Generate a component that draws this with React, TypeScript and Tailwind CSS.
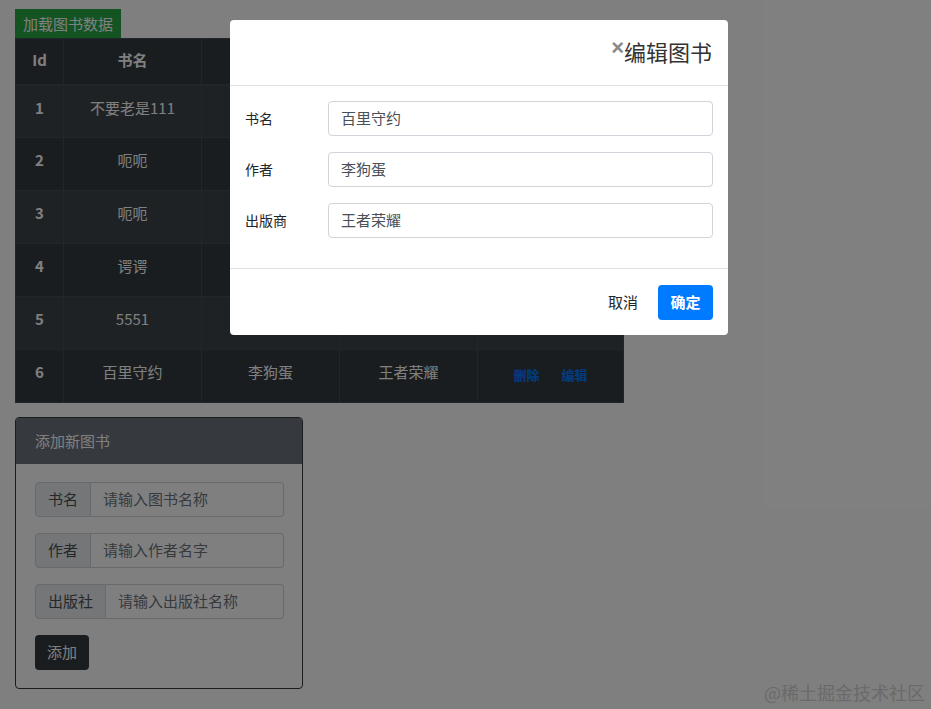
import React from "react";

const rows = [
  { id: 1, name: "不要老是111", author: "", pub: "" },
  { id: 2, name: "呃呃", author: "", pub: "" },
  { id: 3, name: "呃呃", author: "", pub: "" },
  { id: 4, name: "谔谔", author: "", pub: "" },
  { id: 5, name: "5551", author: "", pub: "" },
  { id: 6, name: "百里守约", author: "李狗蛋", pub: "王者荣耀" },
];

function Cell({ children, className = "" }: { children?: React.ReactNode; className?: string }) {
  return (
    <td className={"border border-[#454d55] align-top text-center leading-[24px] " + className}>
      {children}
    </td>
  );
}

export default function App() {
  return (
    <div
      className="relative w-[931px] h-[709px] bg-white overflow-hidden text-[#212529]"
      style={{ fontFamily: '"Noto Sans CJK SC", "Noto Sans", sans-serif' }}
    >
      <div className="pl-[15px] pt-[9px]">
        <button className="h-[29px] px-[8px] bg-[#28a745] text-white text-[15px] leading-[29px] flex items-center">
          加载图书数据
        </button>
        <table className="w-[608px] border-collapse bg-[#343a40] text-white text-[15px] table-fixed">
          <colgroup>
            <col className="w-[48px]" />
            <col className="w-[138px]" />
            <col className="w-[138px]" />
            <col className="w-[138px]" />
            <col className="w-[146px]" />
          </colgroup>
          <thead>
            <tr className="h-[46px]">
              {["Id", "书名", "作者", "出版社", "操作"].map((h) => (
                <th
                  key={h}
                  className="border border-[#454d55] border-b-2 align-top text-center pt-[9px] leading-[24px] font-bold"
                >
                  {h}
                </th>
              ))}
            </tr>
          </thead>
          <tbody>
            {rows.map((r, i) => (
              <tr key={r.id} className={"h-[53px] " + (i % 2 === 0 ? "bg-[#3e444a]" : "")}>
                <Cell className="font-bold pt-[10px]">{r.id}</Cell>
                <Cell className="pt-[10px]">{r.name}</Cell>
                <Cell className="pt-[10px]">{r.author}</Cell>
                <Cell className="pt-[10px]">{r.pub}</Cell>
                <Cell className="pt-[13px]">
                  <div className="flex justify-center gap-[22px] text-[13px] text-[#007bff] font-bold leading-[24px]">
                    <span>删除</span>
                    <span>编辑</span>
                  </div>
                </Cell>
              </tr>
            ))}
          </tbody>
        </table>

        <div className="mt-[14px] w-[288px] h-[272px] border border-[#343a40] rounded-[4px] overflow-hidden flex flex-col">
          <div className="h-[46px] bg-[#6c757d] text-white text-[15px] flex items-center px-[19px]">添加新图书</div>
          <div className="px-[19px] pt-[18px] flex flex-col gap-[16px]">
            {[
              ["书名", "请输入图书名称"],
              ["作者", "请输入作者名字"],
              ["出版社", "请输入出版社名称"],
            ].map(([l, p]) => (
              <div key={l} className="flex h-[35px] w-[249px] text-[15px]">
                <div className="px-[12px] flex items-center bg-[#e9ecef] border border-[#ced4da] rounded-l-[4px] text-[#495057]">
                  {l}
                </div>
                <div className="flex-1 flex items-center px-[12px] border border-l-0 border-[#ced4da] rounded-r-[4px] text-[#6c757d]">
                  {p}
                </div>
              </div>
            ))}
            <button className="w-[54px] h-[35px] bg-[#343a40] text-white text-[15px] rounded-[4px] flex items-center justify-center">
              添加
            </button>
          </div>
        </div>
      </div>

      <div className="absolute inset-0 bg-black/50" />

      <div className="absolute left-[230px] top-[20px] w-[498px] h-[315px] bg-white rounded-[4px] flex flex-col">
        <div className="h-[66px] border-b border-[#dee2e6] flex justify-end items-start px-[16px] pt-[15px]">
          <span
            className="text-[22px] leading-[24px] text-[#8a8a8a] font-bold mt-[1px]"
            style={{ fontFamily: '"Liberation Sans", Arial, sans-serif' }}
          >
            ×
          </span>
          <span className="text-[22px] leading-[32px] text-[#333]">编辑图书</span>
        </div>
        <div className="px-[15px] pt-[15px] pb-[30px] flex flex-col gap-[16px] border-b border-[#dee2e6]">
          {[
            ["书名", "百里守约"],
            ["作者", "李狗蛋"],
            ["出版商", "王者荣耀"],
          ].map(([l, v]) => (
            <div key={l} className="flex items-center h-[35px]">
              <div className="w-[83px] text-[14px] text-[#212529]">{l}</div>
              <div className="flex-1 h-[35px] border border-[#ced4da] rounded-[4px] flex items-center px-[12px] text-[15px] text-[#495057]">
                {v}
              </div>
            </div>
          ))}
        </div>
        <div className="flex-1 flex items-center justify-end px-[15px] gap-[20px]">
          <span className="text-[15px] text-[#212529]">取消</span>
          <button className="w-[55px] h-[35px] bg-[#007bff] text-white text-[15px] font-bold rounded-[4px] flex items-center justify-center">
            确定
          </button>
        </div>
      </div>

      <div className="absolute right-[6px] bottom-[5px] text-[18px] text-[#6a6a6a] leading-[24px]">
        @稀土掘金技术社区
      </div>
    </div>
  );
}
